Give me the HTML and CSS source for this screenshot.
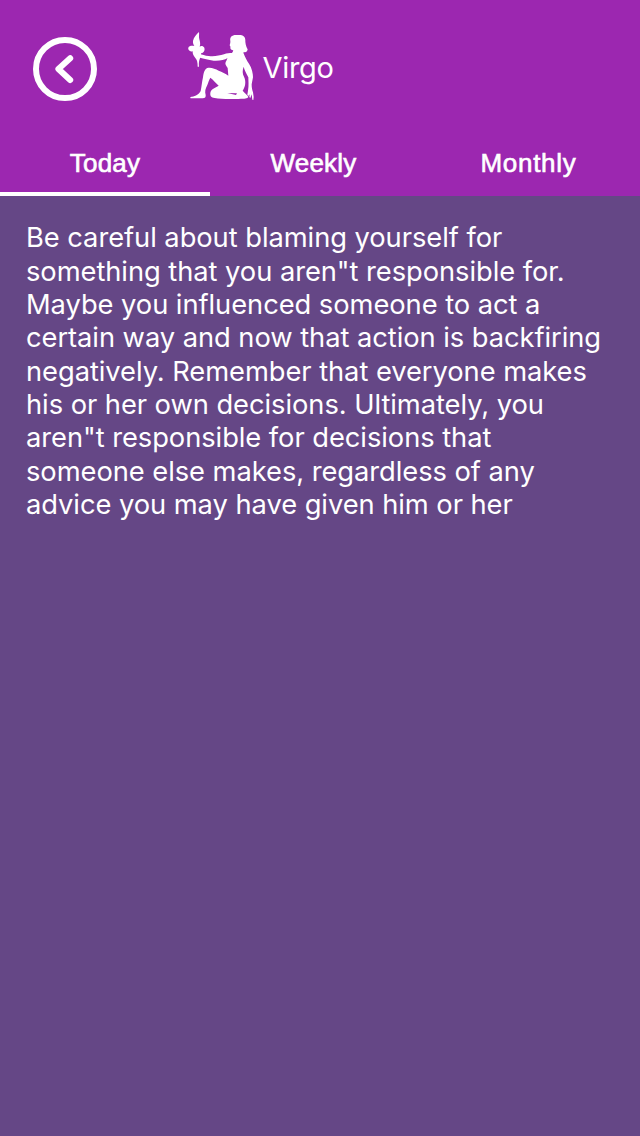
FILE: index.html
```html
<!DOCTYPE html>
<html lang="en">
<head>
    <meta charset="UTF-8">
    <meta name="viewport" content="width=device-width, initial-scale=1.0">
    <title>Virgo</title>
    <link rel="stylesheet" href="styles.css">
</head>
<body>
    <header class="header">
        <div class="title-bar">
            <button type="button" class="back" aria-label="Back">
                <svg viewBox="0 0 64 64">
                    <circle cx="32" cy="32" r="29" />
                    <path d="M37.2 21.2 L25.4 32 L37.2 43" />
                </svg>
            </button>
            <svg class="sign" viewBox="0 0 240 252">
                <!-- flower -->
                <path d="M57 24 C50 31 41 40 39 51 C38 58 41 63 43 66 C36 64 27 65 25 71 C23 78 31 83 38 82 C37 91 42 97 46 102 C51 107 53 115 53 128 L57 128 C56 118 57 109 60 103 L63 91 C63 88 64 87 67 87 C73 84 75 77 73 71 C70 66 63 65 59 68 C62 61 60 53 58 46 C56 39 58 30 57 24 Z" />
                <!-- figure -->
                <path d="M60 90 C66 92 75 95 86 96 C103 98 118 95 132 91 C141 87 148 87 156 87 L160 80 C157 77 151 78 151 72 C153 68 149 66 149 63 C151 59 151 56 151 51 C149 40 155 33 168 33 L181 33 C194 34 197 44 196 53 C197 64 200 70 203 76 C202 83 197 86 192 84 L190 86 C195 98 200 109 207 119 C216 133 219 149 219 160 L215 181 C215 190 216 197 219 205 L221 219 L220 228 L217 227 L215 211 L211 222 L208 219 L209 211 L205 216 L202 212 L204 200 C207 185 205 169 205 160 C199 147 193 138 191 128 C187 139 187 149 192 158 C199 173 196 188 188 200 C194 207 202 213 205 218 C203 224 191 224 183 224 C159 226 124 226 104 222 C93 221 90 216 91 207 C92 195 106 192 116 185 C108 177 100 168 91 161 C87 167 85 176 82 183 C76 194 74 203 77 213 C78 219 75 223 68 223 L34 223 C28 222 31 218 36 218 C47 217 58 210 62 201 C65 187 66 173 69 160 C71 146 74 135 82 132 C92 129 105 134 116 140 C126 144 137 148 145 155 L143 132 C139 126 134 121 137 114 C141 109 140 105 143 102 C133 108 119 111 101 110 C85 107 71 104 60 101 Z" />
                <path class="gap" d="M142 207 L171 208 L168 213 Z" />
            </svg>
            <h1>Virgo</h1>
        </div>
        <nav class="tabs">
            <a class="tab active">Today</a>
            <a class="tab">Weekly</a>
            <a class="tab monthly">Monthly</a>
        </nav>
    </header>
    <main class="horoscope">
        <p>
            Be careful about blaming yourself for<br>
            something that you aren"t responsible for.<br>
            Maybe you influenced someone to act a<br>
            certain way and now that action is backfiring<br>
            negatively. Remember that everyone makes<br>
            his or her own decisions. Ultimately, you<br>
            aren"t responsible for decisions that<br>
            someone else makes, regardless of any<br>
            advice you may have given him or her
        </p>
    </main>
</body>
</html>
```
FILE: styles.css
```css
* {
    box-sizing: border-box;
}
body {
    margin: 0;
    min-height: 100vh;
    background-color: #654786;
    color: #fff;
    font-family: Inter, "Liberation Sans", sans-serif;
}
.header {
    height: 196px;
    background-color: #9c27b0;
}
.title-bar {
    display: flex;
    align-items: flex-start;
    height: 136px;
    padding: 24px 0 0 33px;
}
.back {
    width: 64px;
    height: 64px;
    margin: 13px 83px 0 0;
    padding: 0;
    border: 0;
    background: none;
    cursor: pointer;
}
.back svg {
    display: block;
    fill: none;
    stroke: #fff;
    stroke-width: 6;
    stroke-linecap: round;
    stroke-linejoin: round;
}
.sign {
    width: 80px;
    height: 84px;
    fill: #fff;
}
.sign .gap {
    fill: #9c27b0;
}
h1 {
    margin: 26px 0 0 2.5px;
    font-size: 29px;
    font-weight: 400;
    line-height: 36px;
    letter-spacing: -0.3px;
}
.tabs {
    display: grid;
    grid-template-columns: 210px 207px 1fr;
    height: 60px;
}
.tab {
    padding-top: 12px;
    border-bottom: 4px solid transparent;
    font-family: "Liberation Sans", Arial, sans-serif;
    font-size: 26px;
    line-height: 30px;
    letter-spacing: 0.2px;
    text-align: center;
    -webkit-text-stroke: 0.6px #fff;
}
.tab.active {
    border-bottom-color: #fff;
}
.tab.monthly {
    letter-spacing: 0.7px;
}
.horoscope {
    padding: 25.3px 26px;
}
.horoscope p {
    margin: 0;
    font-size: 27.3px;
    line-height: 33.35px;
    letter-spacing: -0.05px;
    white-space: nowrap;
}
```
